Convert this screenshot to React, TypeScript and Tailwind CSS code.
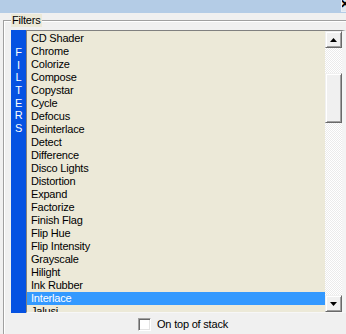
import React from 'react';

const filters = [
  'CD Shader',
  'Chrome',
  'Colorize',
  'Compose',
  'Copystar',
  'Cycle',
  'Defocus',
  'Deinterlace',
  'Detect',
  'Difference',
  'Disco Lights',
  'Distortion',
  'Expand',
  'Factorize',
  'Finish Flag',
  'Flip Hue',
  'Flip Intensity',
  'Grayscale',
  'Hilight',
  'Ink Rubber',
  'Interlace',
  'Jalusi',
];

const SELECTED = 'Interlace';

const Arrow: React.FC<{ down?: boolean }> = ({ down }) => (
  <svg width="7" height="4" viewBox="0 0 7 4" className="block">
    {down ? <polygon points="0,0 7,0 3.5,4" fill="#000" /> : <polygon points="0,4 7,4 3.5,0" fill="#000" />}
  </svg>
);

const ScrollButton: React.FC<{ down?: boolean }> = ({ down }) => (
  <div className="h-[17px] w-[17px] shrink-0 bg-[#f0f0f0] border border-t-[#f0f0f0] border-l-[#f0f0f0] border-r-[#696969] border-b-[#696969] shadow-[inset_1px_1px_0_#fff,inset_-1px_-1px_0_#a0a0a0] flex items-center justify-center">
    <Arrow down={down} />
  </div>
);

export default function App() {
  return (
    <div className="relative w-[346px] h-[334px] overflow-hidden bg-[#f0f0f0] font-['Liberation_Sans',Arial,sans-serif] text-[11px] tracking-[-0.2px] text-black">
      {/* window title strip */}
      <div className="relative h-[13px] bg-[#b4cce6]">
        <div className="absolute right-0 top-0 h-[12px] w-[5px] border-l border-b border-[#e8eef6] bg-[#dfe6ee] overflow-hidden">
          <span className="absolute -left-[2px] -top-[3px] text-[12px] font-bold leading-[14px]">✕</span>
        </div>
      </div>

      {/* group box */}
      <div className="relative mt-[7px] ml-[3px] h-[320px] border-t border-l border-[#a0a0a0] shadow-[inset_1px_1px_0_#fff]">
        <span className="absolute left-[7px] -top-[7px] px-px bg-[#ece9d8] leading-[13px]">Filters</span>

        <div className="flex pt-[9px] pl-[7px]">
          {/* vertical FILTERS tab */}
          <div className="w-[15px] h-[283px] shrink-0 bg-[#0552e2] pt-[16px] flex flex-col items-center text-white">
            {'FILTERS'.split('').map((c, i) => (
              <span key={i} className="h-[12.7px] leading-[13px] text-center">
                {c}
              </span>
            ))}
          </div>

          {/* list box */}
          <div className="w-[320px] h-[283px] shrink-0 flex border-t border-l border-b border-t-[#808080] border-l-[#808080] border-b-[#f7f7f7] border-r-4 border-r-[#f4f4f4] bg-[#ece9d8]">
            <div className="w-[298px] shrink-0 overflow-hidden pt-px">
              {filters.map((f) => (
                <div
                  key={f}
                  className={
                    f === SELECTED
                      ? 'h-[13px] leading-[13px] pl-[4px] whitespace-nowrap bg-[#3399ff] text-white'
                      : 'h-[13px] leading-[13px] pl-[4px] whitespace-nowrap'
                  }
                >
                  {f}
                </div>
              ))}
            </div>

            {/* scrollbar */}
            <div className="w-[17px] shrink-0 flex flex-col bg-[repeating-conic-gradient(#ffffff_0_25%,#ebebeb_0_50%)] bg-[length:2px_2px]">
              <ScrollButton />
              <div className="h-[25px] shrink-0" />
              <div className="h-[50px] w-[17px] shrink-0 bg-[#f0f0f0] border border-t-[#f0f0f0] border-l-[#f0f0f0] border-r-[#696969] border-b-[#696969] shadow-[inset_1px_1px_0_#fff,inset_-1px_-1px_0_#a0a0a0]" />
              <div className="flex-1" />
              <ScrollButton down />
            </div>
          </div>
        </div>

        {/* checkbox row */}
        <div className="mt-[5px] pl-[134px] flex items-center gap-[6px]">
          <div className="w-[13px] h-[13px] bg-white border border-t-[#a0a0a0] border-l-[#a0a0a0] border-r-white border-b-white shadow-[inset_1px_1px_0_#696969,inset_-1px_-1px_0_#e3e3e3]" />
          <span className="leading-[13px]">On top of stack</span>
        </div>
      </div>
    </div>
  );
}
